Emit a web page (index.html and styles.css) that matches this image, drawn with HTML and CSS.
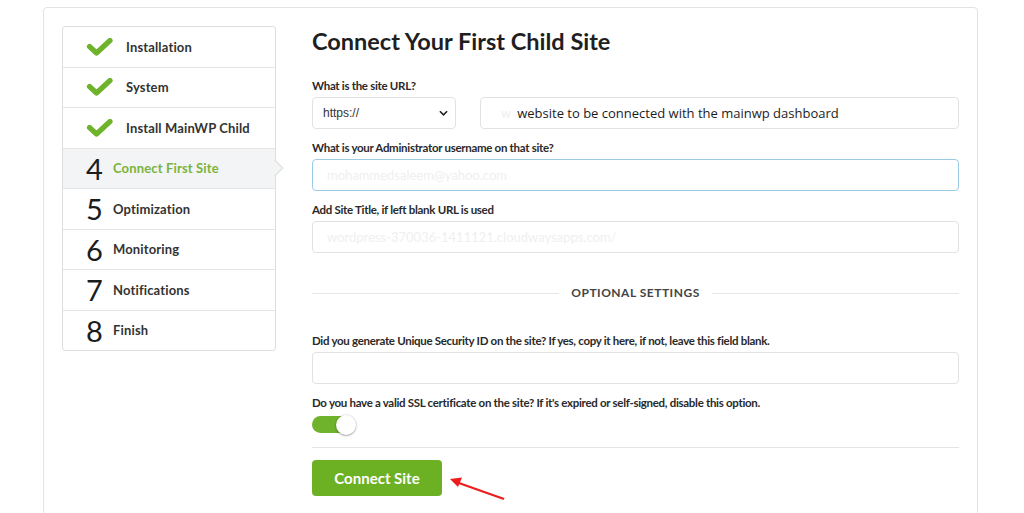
FILE: index.html
```html
<!DOCTYPE html>
<html>
<head>
<meta charset="utf-8">
<link rel="stylesheet" href="styles.css">
</head>
<body>
<div class="card">
  <ul class="steps">
    <li class="step done"><svg class="check" viewBox="0 0 26 18"><path d="M3 8.5 L10 15 L23.5 2.5" /></svg><span class="step-label">Installation</span></li>
    <li class="step done"><svg class="check" viewBox="0 0 26 18"><path d="M3 8.5 L10 15 L23.5 2.5" /></svg><span class="step-label">System</span></li>
    <li class="step done"><svg class="check" viewBox="0 0 26 18"><path d="M3 8.5 L10 15 L23.5 2.5" /></svg><span class="step-label">Install MainWP Child</span></li>
    <li class="step active"><span class="num">4</span><span class="step-label">Connect First Site</span></li>
    <li class="step"><span class="num">5</span><span class="step-label">Optimization</span></li>
    <li class="step"><span class="num">6</span><span class="step-label">Monitoring</span></li>
    <li class="step"><span class="num">7</span><span class="step-label">Notifications</span></li>
    <li class="step"><span class="num">8</span><span class="step-label">Finish</span></li>
  </ul>
  <div class="content">
    <h1 class="title">Connect Your First Child Site</h1>
    <div class="field first">
      <div class="label">What is the site URL?</div>
      <div class="url-row">
        <div class="select">https://<svg class="chev" viewBox="0 0 10 6"><path d="M1 1 L5 5 L9 1"/></svg></div>
        <div class="input url"><span class="faint">w</span><span class="overlay">website to be connected with the mainwp dashboard</span></div>
      </div>
    </div>
    <div class="field">
      <div class="label">What is your Administrator username on that site?</div>
      <div class="input focus"><span class="faint">mohammedsaleem@yahoo.com</span></div>
    </div>
    <div class="field">
      <div class="label">Add Site Title, if left blank URL is used</div>
      <div class="input"><span class="faint">wordpress-370036-1411121.cloudwaysapps.com/</span></div>
    </div>
    <div class="divider"><span class="line"></span><span class="div-text">OPTIONAL SETTINGS</span><span class="line"></span></div>
    <div class="field">
      <div class="label">Did you generate Unique Security ID on the site? If yes, copy it here, if not, leave this field blank.</div>
      <div class="input"></div>
    </div>
    <div class="field">
      <div class="label">Do you have a valid SSL certificate on the site? If it's expired or self-signed, disable this option.</div>
      <div class="toggle"><span class="knob"></span></div>
    </div>
    <hr class="rule">
    <div class="actions">
      <button class="btn">Connect Site</button>
      <svg class="arrow" viewBox="0 0 60 26"><path d="M56 24 L8 7" /><path class="head" d="M2 4 L14 2.5 L10 12 Z"/></svg>
    </div>
  </div>
</div>
</body>
</html>
```
FILE: styles.css
```css
* { box-sizing: border-box; }
html, body { margin: 0; padding: 0; background: #fff; }
body { font-family: Lato, "Open Sans", sans-serif; color: #222; overflow: hidden; height: 513px; }

.card {
  margin: 7px 0 0 43px;
  width: 935px;
  height: 540px;
  border: 1px solid #e3e3e3;
  border-radius: 4px;
  padding: 18px 18px 0 18px;
  display: flex;
  gap: 36px;
  align-items: flex-start;
}

.steps {
  list-style: none;
  margin: 0;
  padding: 0;
  width: 214px;
  border: 1px solid #dedede;
  border-radius: 3px;
  flex: none;
}
.step {
  height: 40.5px;
  display: flex;
  align-items: center;
  padding-left: 23px;
  border-top: 1px solid #e4e4e4;
  position: relative;
}
.step:first-child { border-top: none; height: 39.5px; }
.step.active { background: #f3f4f5; }
.step.active::after {
  content: "";
  position: absolute;
  right: -6px;
  top: 50%;
  width: 11px;
  height: 11px;
  margin-top: -6px;
  background: #f3f4f5;
  border-top: 1px solid #dedede;
  border-right: 1px solid #dedede;
  transform: rotate(45deg);
}
.check { width: 27px; height: 18px; margin-right: 13px; }
.check path { fill: none; stroke: #6fb22c; stroke-width: 5.2; stroke-linecap: round; stroke-linejoin: round; }
.num {
  font-size: 29px;
  line-height: 1;
  width: 27px;
  font-weight: 400;
  color: #1b1c1d;
}
.step-label { font-size: 13px; font-weight: 700; color: #333; letter-spacing: 0.15px; }
.step.active .step-label { color: #7ab33c; }

.content { flex: 1; display: flex; flex-direction: column; }
.title {
  margin: 0;
  font-size: 23.5px;
  line-height: 30px;
  font-weight: 700;
  color: #1f1f1f;
}
.field { display: flex; flex-direction: column; margin-top: 11px; }
.field.first { margin-top: 22px; }
.label {
  font-size: 11.5px;
  font-weight: 700;
  line-height: 16px;
  color: #2a2a2a;
  margin-bottom: 3px;
  letter-spacing: -0.3px;
}
.url-row { display: flex; gap: 24px; }
.select {
  width: 144px;
  height: 32px;
  border: 1px solid #e2e2e2;
  border-radius: 4px;
  display: flex;
  align-items: center;
  justify-content: space-between;
  padding: 0 7px 0 10px;
  font-family: "Liberation Sans", Arial, sans-serif;
  font-size: 12px;
  color: #333;
}
.chev { width: 9px; height: 6px; }
.chev path { fill: none; stroke: #222; stroke-width: 1.8; }
.input {
  height: 32px;
  border: 1px solid #e2e2e2;
  border-radius: 4px;
  display: flex;
  align-items: center;
  padding-left: 14px;
  font-size: 13px;
}
.input.url { flex: 1; padding-left: 20px; }
.input.focus { border-color: #9ccbe6; }
.faint { color: #efefef; }
.overlay {
  font-family: "Open Sans", sans-serif;
  font-size: 13px;
  color: #1c1c1c;
  margin-left: 6px;
}
.divider {
  display: flex;
  align-items: center;
  gap: 12px;
  margin-top: 32px;
  margin-bottom: 21px;
}
.line { flex: 1; height: 1px; background: #e6e6e6; }
.div-text { font-size: 12px; font-weight: 700; letter-spacing: 0.5px; color: #444; line-height: 16px; }
.toggle {
  width: 43px;
  height: 17px;
  border-radius: 9px;
  background: #6fb22c;
  position: relative;
  margin-top: 2px;
}
.knob {
  position: absolute;
  right: -1px;
  top: -1.5px;
  width: 20px;
  height: 20px;
  border-radius: 50%;
  background: #fff;
  box-shadow: 0 1px 2px rgba(0,0,0,0.3), 0 0 0 1px rgba(0,0,0,0.06);
}
.rule { border: 0; border-top: 1px solid #e4e4e4; margin: 14px 0 12px 0; width: 100%; }
.actions { position: relative; }
.btn {
  width: 130px;
  height: 36px;
  border: 0;
  border-radius: 4px;
  background: #6cb024;
  color: #fff;
  font-family: Lato, sans-serif;
  font-size: 15px;
  font-weight: 700;
}
.arrow {
  position: absolute;
  left: 136px;
  top: 15px;
  width: 60px;
  height: 26px;
}
.arrow path { fill: none; stroke: #ee1c1c; stroke-width: 2.2; }
.arrow path.head { fill: #ee1c1c; stroke: none; }
```
